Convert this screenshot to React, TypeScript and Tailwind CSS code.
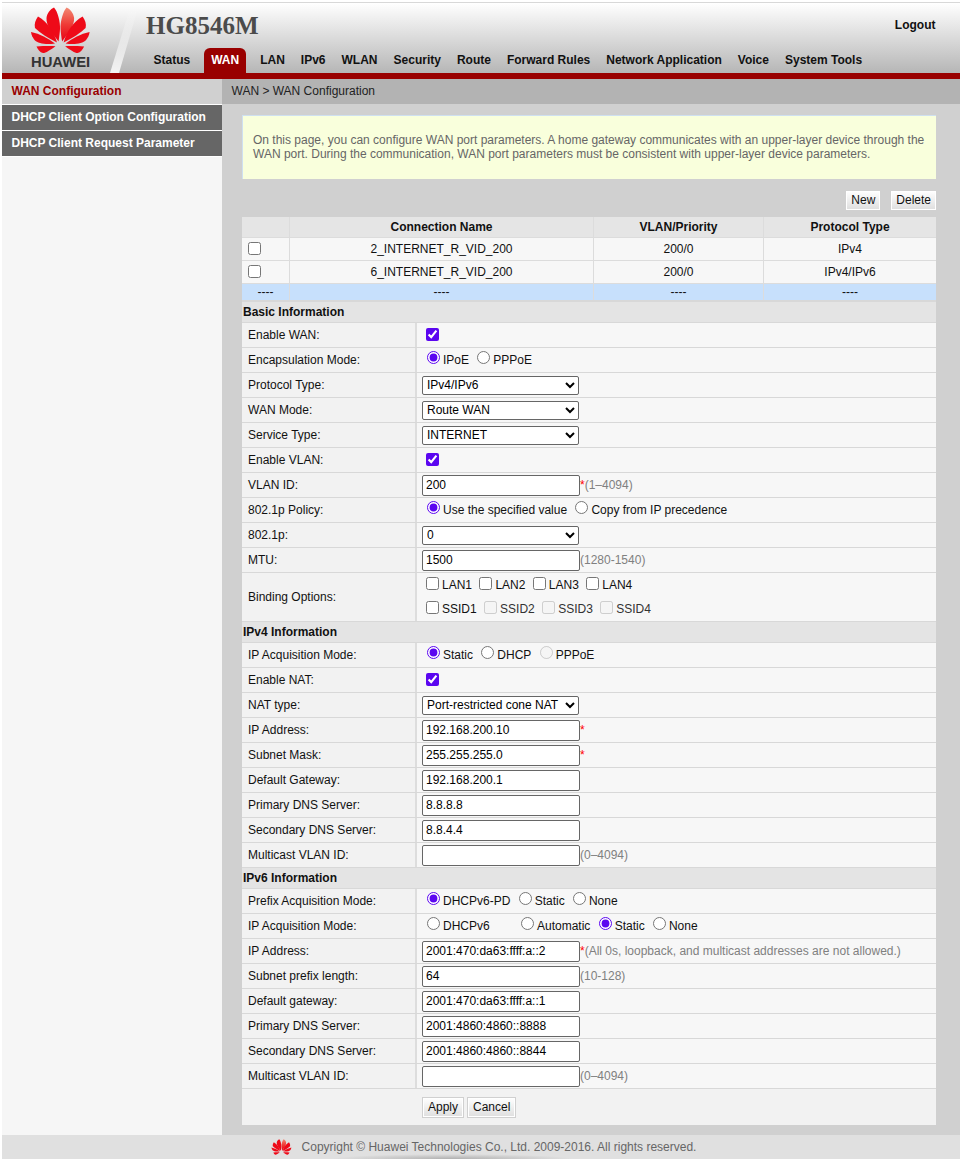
import type { ReactNode } from "react";

function Petals({ id }: { id: string }) {
  const left = [
    "M58.5 41.5C52 33 46 25 46.5 18C47 13 50.5 9 54 7.5C57.5 11 60.5 22 60 29C59.8 33 59.2 37 58.5 41.5Z",
    "M57 42.5C54 32 48 22 38 16.5C35.5 20 34 24 35 28C40 33 48 38 57 42.5Z",
    "M55 43.5C48 38 40 34 31 32C31.5 35 32.5 37.5 34.5 40C38 43.5 46 45 55 43.5Z",
    "M55.5 46.2C50 50 46 53 43 53C40 52.5 38 49.5 36.5 46.5C42 46.2 49 46 55.5 46.2Z",
  ];
  return (
    <>
      <defs>
        <linearGradient id={id} x1="0" y1="0" x2="0" y2="1">
          <stop offset="0" stopColor="#f28a74" />
          <stop offset="0.5" stopColor="#ef3b36" />
          <stop offset="1" stopColor="#e60012" />
        </linearGradient>
      </defs>
      {left.map((d, i) => (
        <path key={i} d={d} fill="#ee0a18" />
      ))}
      <g transform="translate(120.6 0) scale(-1 1)">
        {left.map((d, i) => (
          <path key={i} d={d} fill={i === 0 ? `url(#${id})` : "#ee0a18"} />
        ))}
      </g>
    </>
  );
}

function Header() {
  const nav = ["LAN", "IPv6", "WLAN", "Security", "Route", "Forward Rules", "Network Application", "Voice", "System Tools"];
  return (
    <div className="relative flex h-[70px] bg-[linear-gradient(180deg,#ffffff_0%,#b6b6b6_100%)]">
      <svg className="absolute left-0 top-0" width="140" height="70" viewBox="2 3 140 70">
        <defs>
          <linearGradient id="slash" x1="0" y1="0" x2="0" y2="1">
            <stop offset="0" stopColor="#ffffff" stopOpacity="0" />
            <stop offset="1" stopColor="#ffffff" stopOpacity="0.85" />
          </linearGradient>
        </defs>
        <polygon points="130,8 138,8 119,73 110,73" fill="url(#slash)" />
        <Petals id="petalTop" />
      </svg>
      <span className="absolute left-[29px] top-[51px] text-[14.8px] leading-[16px] font-bold text-[#333333]">HUAWEI</span>
      <div className="ml-[144px] flex flex-1 flex-col">
        <div className="flex h-[45px] items-start justify-between">
          <span className="mt-[8px] font-['Liberation_Serif',serif] text-[25px] leading-[29px] font-bold text-[#4b4b4b]">HG8546M</span>
          <span className="mt-[15px] mr-[24.5px] font-bold text-[#111111]">Logout</span>
        </div>
        <nav className="flex h-[25px] gap-4 pl-[7.5px] font-bold text-[#111111]">
          <span className="pt-[5px] leading-[14px]">Status</span>
          <span className="mx-[-2px] rounded-t-[6px] bg-[#990000] px-[7px] pt-[5px] leading-[14px] text-white">WAN</span>
          {nav.map((n) => (
            <span key={n} className="pt-[5px] leading-[14px]">{n}</span>
          ))}
        </nav>
      </div>
    </div>
  );
}

function Sidebar() {
  return (
    <aside className="flex w-[220px] shrink-0 flex-col bg-[#f6f6f6] font-bold">
      <div className="flex h-[26px] items-center border-b border-white bg-[#d0d0d0] pb-[2px] pl-[9.5px] text-[#990000]">WAN Configuration</div>
      <div className="flex h-[26px] items-center border-b border-white bg-[#666666] pb-[2px] pl-[9.5px] text-white">DHCP Client Option Configuration</div>
      <div className="flex h-[26px] items-center border-b border-white bg-[#666666] pb-[2px] pl-[9.5px] text-white">DHCP Client Request Parameter</div>
    </aside>
  );
}

function Btn({ children }: { children: ReactNode }) {
  return (
    <button className="h-[21px] border border-[#d0d0d0] bg-[linear-gradient(180deg,#ffffff,#dedede)] px-[5px] text-[12px] leading-[19px] text-[#111111] shadow-[inset_0_0_0_1px_#ffffff]">
      {children}
    </button>
  );
}

function Row({ label, children, tall }: { label: string; children: ReactNode; tall?: boolean }) {
  return (
    <div className={`flex border-b border-[#d8d8d8] ${tall ? "h-[49px]" : "h-[25px]"}`}>
      <div className="flex w-[175px] shrink-0 items-center border-r-2 border-[#dddddd] bg-[#f2f2f2] pl-[6px] text-[#111111]">{label}</div>
      <div className="flex flex-1 items-center bg-[#f7f7f7] text-[#111111]">{children}</div>
    </div>
  );
}

function Head({ children }: { children: ReactNode }) {
  return <div className="flex h-[21px] items-center border-b border-[#d8d8d8] bg-[#e4e4e4] pl-[1px] font-bold text-[#111111]">{children}</div>;
}

function Check({ checked }: { checked?: boolean }) {
  return <input type="checkbox" defaultChecked={checked} className="mb-[1px] ml-[9px] h-[13px] w-[13px] accent-[#5b06f0]" />;
}

function Radios({ items }: { items: { t: string; on?: boolean; off?: boolean; extra?: string }[] }) {
  return (
    <div className="ml-[10px] flex items-center gap-[8.3px]">
      {items.map((r) => (
        <label key={r.t} className={`flex items-center ${r.extra ?? ""}`}>
          <input type="radio" readOnly checked={!!r.on} disabled={r.off} className="mr-[3px] mb-[5px] h-[13px] w-[13px] accent-[#5b06f0]" />
          {r.t}
        </label>
      ))}
    </div>
  );
}

function Field({ value, star, hint }: { value?: string; star?: boolean; hint?: string }) {
  return (
    <>
      <input readOnly value={value ?? ""} className="ml-[5px] h-[21px] w-[158px] rounded-[2px] border border-[#666666] bg-white px-[3px] text-[12px] text-black" />
      {star && <span className="text-[#ff0000]">*</span>}
      {hint && <span className="text-[#808080]">{hint}</span>}
    </>
  );
}

function Sel({ value }: { value: string }) {
  return (
    <select defaultValue={value} className="ml-[5px] h-[19px] w-[157px] rounded-[2px] border border-[#666666] bg-white text-[12px] text-black">
      <option>{value}</option>
    </select>
  );
}

function Bind({ items }: { items: { t: string; off?: boolean }[] }) {
  return (
    <div className="flex items-center gap-[7.4px]">
      {items.map((c) => (
        <label key={c.t} className={`flex items-center ${c.off ? "text-[#333333]" : ""}`}>
          <input type="checkbox" disabled={c.off} className="mr-[3px] mb-[3px] h-[13px] w-[13px]" />
          {c.t}
        </label>
      ))}
    </div>
  );
}

function ConnTable() {
  const rows = [
    { n: "2_INTERNET_R_VID_200", v: "200/0", p: "IPv4" },
    { n: "6_INTERNET_R_VID_200", v: "200/0", p: "IPv4/IPv6" },
  ];
  return (
    <div className="grid grid-cols-[47px_303px_169px_1fr] gap-px bg-[#dcdcdc] text-center text-[#111111]">
      <div className="h-[20px] bg-[#e5e5e5]" />
      <div className="flex h-[20px] items-center justify-center bg-[#e5e5e5] font-bold">Connection Name</div>
      <div className="flex h-[20px] items-center justify-center bg-[#e5e5e5] font-bold">VLAN/Priority</div>
      <div className="flex h-[20px] items-center justify-center bg-[#e5e5e5] font-bold">Protocol Type</div>
      {rows.map((r) => (
        <div key={r.n} className="contents">
          <div className="flex h-[22px] items-center bg-[#f7f7f7] pl-[6px]">
            <input type="checkbox" className="mb-[1px] h-[13px] w-[13px]" />
          </div>
          <div className="flex h-[22px] items-center justify-center bg-[#f7f7f7]">{r.n}</div>
          <div className="flex h-[22px] items-center justify-center bg-[#f7f7f7]">{r.v}</div>
          <div className="flex h-[22px] items-center justify-center bg-[#f7f7f7]">{r.p}</div>
        </div>
      ))}
      {[0, 1, 2, 3].map((i) => (
        <div key={i} className="flex h-[16px] items-center justify-center bg-[#c7e0fc]">----</div>
      ))}
    </div>
  );
}

function Content() {
  return (
    <main className="flex flex-1 flex-col bg-[#d0d0d0]">
      <div className="flex h-[25px] items-center bg-[#b3b3b3] pb-[2px] pl-[9.5px] text-[#222222]">WAN &gt; WAN Configuration</div>
      <div className="ml-[20px] mr-[24px] flex flex-col">
        <div className="mt-[11px] flex h-[64px] items-center border-t border-l border-[#cfe0f0] bg-[#f9ffdc] pr-[6px] pb-[2px] pl-[10px] leading-[14px] text-[#666666]">
          <p>
            On this page, you can configure WAN port parameters. A home gateway communicates with an upper-layer device through the WAN port. During the communication, WAN port parameters must be consistent with upper-layer device parameters.
          </p>
        </div>
        <div className="mt-[11px] mr-[-1px] mb-[6px] flex justify-end gap-[9px]">
          <Btn>New</Btn>
          <Btn>Delete</Btn>
        </div>
        <ConnTable />
        <div className="h-[2px] bg-[#d8d8d8]" />
        <Head>Basic Information</Head>
        <Row label="Enable WAN:"><Check checked /></Row>
        <Row label="Encapsulation Mode:"><Radios items={[{ t: "IPoE", on: true }, { t: "PPPoE" }]} /></Row>
        <Row label="Protocol Type:"><Sel value="IPv4/IPv6" /></Row>
        <Row label="WAN Mode:"><Sel value="Route WAN" /></Row>
        <Row label="Service Type:"><Sel value="INTERNET" /></Row>
        <Row label="Enable VLAN:"><Check checked /></Row>
        <Row label="VLAN ID:"><Field value="200" star hint="(1–4094)" /></Row>
        <Row label="802.1p Policy:"><Radios items={[{ t: "Use the specified value", on: true }, { t: "Copy from IP precedence" }]} /></Row>
        <Row label="802.1p:"><Sel value="0" /></Row>
        <Row label="MTU:"><Field value="1500" hint="(1280-1540)" /></Row>
        <Row label="Binding Options:" tall>
          <div className="ml-[9px] flex flex-col gap-[8px]">
            <Bind items={[{ t: "LAN1" }, { t: "LAN2" }, { t: "LAN3" }, { t: "LAN4" }]} />
            <Bind items={[{ t: "SSID1" }, { t: "SSID2", off: true }, { t: "SSID3", off: true }, { t: "SSID4", off: true }]} />
          </div>
        </Row>
        <Head>IPv4 Information</Head>
        <Row label="IP Acquisition Mode:"><Radios items={[{ t: "Static", on: true }, { t: "DHCP" }, { t: "PPPoE", off: true }]} /></Row>
        <Row label="Enable NAT:"><Check checked /></Row>
        <Row label="NAT type:"><Sel value="Port-restricted cone NAT" /></Row>
        <Row label="IP Address:"><Field value="192.168.200.10" star /></Row>
        <Row label="Subnet Mask:"><Field value="255.255.255.0" star /></Row>
        <Row label="Default Gateway:"><Field value="192.168.200.1" /></Row>
        <Row label="Primary DNS Server:"><Field value="8.8.8.8" /></Row>
        <Row label="Secondary DNS Server:"><Field value="8.8.4.4" /></Row>
        <Row label="Multicast VLAN ID:"><Field hint="(0–4094)" /></Row>
        <Head>IPv6 Information</Head>
        <Row label="Prefix Acquisition Mode:"><Radios items={[{ t: "DHCPv6-PD", on: true }, { t: "Static" }, { t: "None" }]} /></Row>
        <Row label="IP Acquisition Mode:"><Radios items={[{ t: "DHCPv6", extra: "mr-[23px]" }, { t: "Automatic" }, { t: "Static", on: true }, { t: "None" }]} /></Row>
        <Row label="IP Address:"><Field value="2001:470:da63:ffff:a::2" star hint="(All 0s, loopback, and multicast addresses are not allowed.)" /></Row>
        <Row label="Subnet prefix length:"><Field value="64" hint="(10-128)" /></Row>
        <Row label="Default gateway:"><Field value="2001:470:da63:ffff:a::1" /></Row>
        <Row label="Primary DNS Server:"><Field value="2001:4860:4860::8888" /></Row>
        <Row label="Secondary DNS Server:"><Field value="2001:4860:4860::8844" /></Row>
        <Row label="Multicast VLAN ID:"><Field hint="(0–4094)" /></Row>
        <div className="flex h-[36px] items-center gap-[3px] bg-[#f2f2f2] pl-[180px]">
          <Btn>Apply</Btn>
          <Btn>Cancel</Btn>
        </div>
      </div>
    </main>
  );
}

export default function App() {
  return (
    <div className="flex h-[1159px] w-[960px] flex-col overflow-hidden bg-white pt-[2px] pl-[2px] font-['Liberation_Sans',Arial,sans-serif] text-[12px] leading-[14px]">
      <div className="h-px bg-[#d8d8d8]" />
      <Header />
      <div className="h-[6px] bg-[#990000]" />
      <div className="flex flex-1">
        <Sidebar />
        <Content />
      </div>
      <footer className="flex h-[24px] items-center justify-center gap-[10px] bg-[#e0e0e0] bg-[radial-gradient(120px_5px_at_450px_100%,#b0b0b0,transparent)] pl-[5px] text-[#666666]">
        <svg width="21" height="16" viewBox="30 7 61 47">
          <Petals id="petalFoot" />
        </svg>
        <span>Copyright © Huawei Technologies Co., Ltd. 2009-2016. All rights reserved.</span>
      </footer>
    </div>
  );
}
